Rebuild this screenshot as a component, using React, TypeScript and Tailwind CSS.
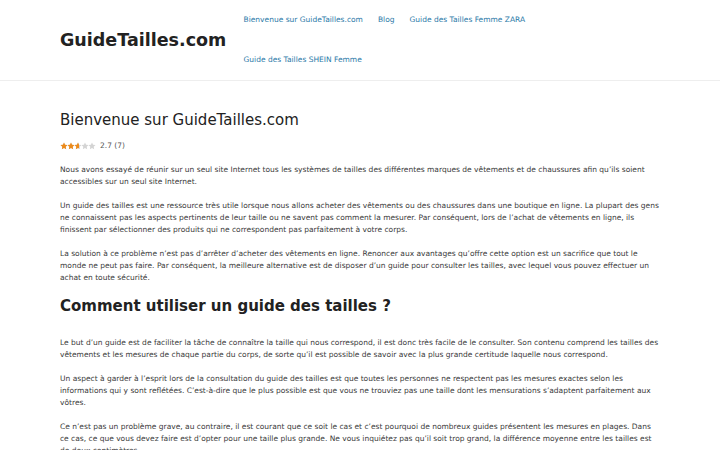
import React from 'react';

const navItems = [
  'Bienvenue sur GuideTailles.com',
  'Blog',
  'Guide des Tailles Femme ZARA',
  'Guide des Tailles SHEIN Femme',
];

const STAR = 'M12 1.5l3.2 6.9 7.3.8-5.4 5 1.5 7.3L12 17.8l-6.6 3.7 1.5-7.3-5.4-5 7.3-.8z';

const Stars = ({ value }: { value: number }) => (
  <div className="flex">
    {[0, 1, 2, 3, 4].map((i) => {
      const fill = Math.max(0, Math.min(1, value - i));
      return (
        <div key={i} className="relative w-[7px] h-[8px]">
          <svg viewBox="0 0 24 24" className="absolute left-[-0.5px] top-0 w-[8px] h-[8px]">
            <path d={STAR} fill="#d4d4d4" />
          </svg>
          <div className="absolute inset-y-0 left-0 overflow-hidden" style={{ width: `${fill * 100}%` }}>
            <svg viewBox="0 0 24 24" className="ml-[-0.5px] w-[8px] h-[8px]">
              <path d={STAR} fill="#ed8a19" />
            </svg>
          </div>
        </div>
      );
    })}
  </div>
);

export default function App() {
  return (
    <div className="min-h-screen bg-white text-[#3a3a3a]" style={{ fontFamily: '"DejaVu Sans", sans-serif' }}>
      {/* Header */}
      <header className="border-b border-[#eeeeee]">
        <div className="w-[600px] mx-[60px] flex items-center h-[80px]">
          <div className="text-[17.5px] font-bold text-[#222222] w-[176px] shrink-0 whitespace-nowrap">GuideTailles.com</div>
          <nav className="flex flex-wrap text-[7.5px] text-[#2b79a8]">
            {navItems.map((item) => (
              <a key={item} className="px-[7.5px] leading-[40px] whitespace-nowrap">{item}</a>
            ))}
          </nav>
        </div>
      </header>

      {/* Content */}
      <main className="w-[600px] mx-[60px] pt-[28px] text-[7.5px] leading-[12px]">
        <h1 className="text-[15px] leading-[22px] text-[#222222] mb-[9px]">Bienvenue sur GuideTailles.com</h1>
        <div className="flex items-center gap-[5px] h-[12px] mb-[12px]">
          <Stars value={2.7} />
          <span className="text-[#555555]">2.7 (7)</span>
        </div>
        <p className="mb-[12px]">
          Nous avons essayé de réunir sur un seul site Internet tous les systèmes de tailles des différentes marques de vêtements et de chaussures afin qu’ils soient accessibles sur un seul site Internet.
        </p>
        <p className="mb-[12px]">
          Un guide des tailles est une ressource très utile lorsque nous allons acheter des vêtements ou des chaussures dans une boutique en ligne. La plupart des gens ne connaissent pas les aspects pertinents de leur taille ou ne savent pas comment la mesurer. Par conséquent, lors de l’achat de vêtements en ligne, ils finissent par sélectionner des produits qui ne correspondent pas parfaitement à votre corps.
        </p>
        <p className="mb-[12px]">
          La solution à ce problème n’est pas d’arrêter d’acheter des vêtements en ligne. Renoncer aux avantages qu’offre cette option est un sacrifice que tout le monde ne peut pas faire. Par conséquent, la meilleure alternative est de disposer d’un guide pour consulter les tailles, avec lequel vous pouvez effectuer un achat en toute sécurité.
        </p>
        <h2 className="text-[15px] leading-[20px] font-bold text-[#222222] mb-[21px]">Comment utiliser un guide des tailles ?</h2>
        <p className="mb-[12px]">
          Le but d’un guide est de faciliter la tâche de connaître la taille qui nous correspond, il est donc très facile de le consulter. Son contenu comprend les tailles des vêtements et les mesures de chaque partie du corps, de sorte qu’il est possible de savoir avec la plus grande certitude laquelle nous correspond.
        </p>
        <p className="mb-[12px]">
          Un aspect à garder à l’esprit lors de la consultation du guide des tailles est que toutes les personnes ne respectent pas les mesures exactes selon les informations qui y sont reflétées. C’est-à-dire que le plus possible est que vous ne trouviez pas une taille dont les mensurations s’adaptent parfaitement aux vôtres.
        </p>
        <p className="mb-[12px]">
          Ce n’est pas un problème grave, au contraire, il est courant que ce soit le cas et c’est pourquoi de nombreux guides présentent les mesures en plages. Dans ce cas, ce que vous devez faire est d’opter pour une taille plus grande. Ne vous inquiétez pas qu’il soit trop grand, la différence moyenne entre les tailles est de deux centimètres.
        </p>
      </main>
    </div>
  );
}
